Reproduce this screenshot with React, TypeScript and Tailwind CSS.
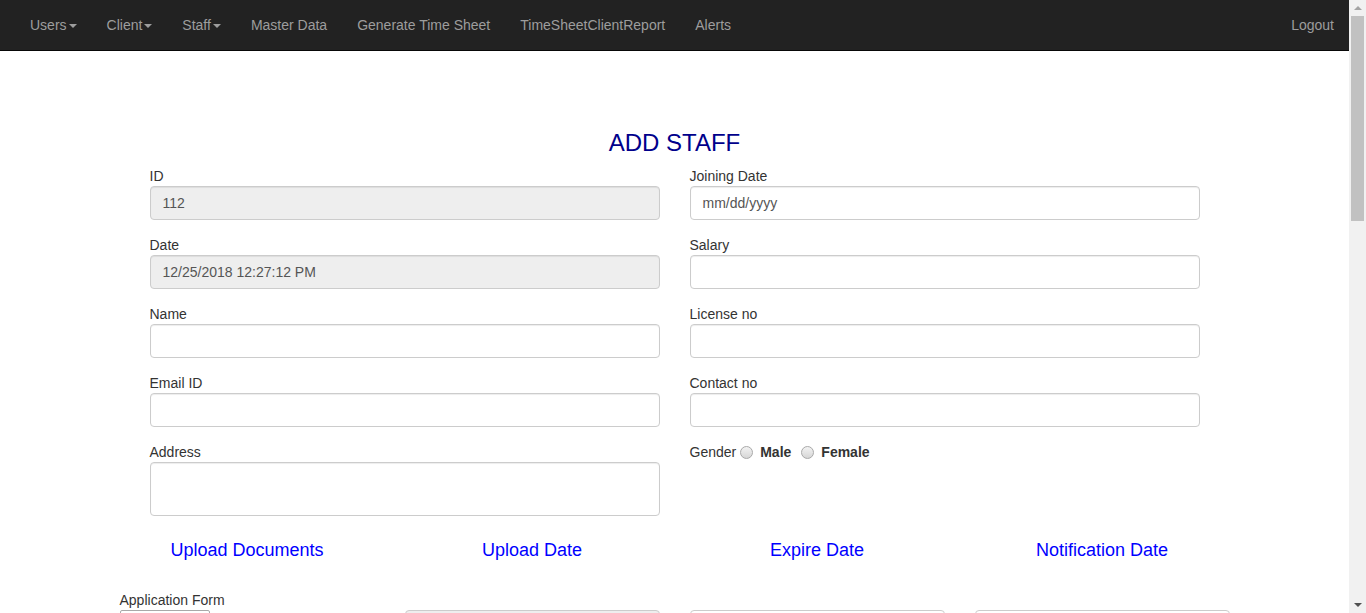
import React from "react";

const Caret = () => (
  <span className="ml-[2px] inline-block h-0 w-0 align-middle border-t-[4px] border-x-[4px] border-t-[#9d9d9d] border-x-transparent" />
);

const navItems: { label: string; caret?: boolean }[] = [
  { label: "Users", caret: true },
  { label: "Client", caret: true },
  { label: "Staff", caret: true },
  { label: "Master Data" },
  { label: "Generate Time Sheet" },
  { label: "TimeSheetClientReport" },
  { label: "Alerts" },
];

const Field = ({
  label,
  value,
  readOnly,
  tall,
}: {
  label: string;
  value?: string;
  readOnly?: boolean;
  tall?: boolean;
}) => (
  <div className="mb-[15px]">
    <div className="h-[20px] leading-[20px]">{label}</div>
    <div
      className={`w-full rounded-[4px] border border-[#ccc] px-[12px] py-[6px] leading-[20px] text-[#555] shadow-[inset_0_1px_1px_rgba(0,0,0,0.075)] ${
        readOnly ? "bg-[#eee]" : "bg-white"
      } ${tall ? "h-[54px]" : "h-[34px]"}`}
    >
      {value ?? ""}
    </div>
  </div>
);

const Radio = () => (
  <span className="inline-block h-[13px] w-[13px] rounded-full border border-[#a9a9a9] bg-gradient-to-b from-[#f3f3f3] to-[#d6d6d6]" />
);

export default function App() {
  return (
    <div className="flex h-[613px] w-[1366px] overflow-hidden bg-white font-['Liberation_Sans',Arial,sans-serif] text-[14px] leading-[20px] text-[#333]">
      <div className="min-w-0 flex-1 overflow-hidden">
        <nav className="flex h-[51px] justify-between border-b border-[#080808] bg-[#222] px-[15px]">
          <ul className="flex">
            {navItems.map((it) => (
              <li key={it.label} className="px-[15px] py-[15px] text-[#9d9d9d] leading-[20px]">
                {it.label}
                {it.caret && <Caret />}
              </li>
            ))}
          </ul>
          <ul className="-mr-[15px] flex">
            <li className="px-[15px] py-[15px] text-[#9d9d9d] leading-[20px]">Logout</li>
          </ul>
        </nav>

        <h3 className="mt-[79px] text-center text-[24px] leading-[26px] text-[#00008b]">ADD STAFF</h3>

        <div className="mx-auto mt-[10px] grid w-[1080px] grid-cols-2">
          <div className="px-[15px]">
            <Field label="ID" value="112" readOnly />
            <Field label="Date" value="12/25/2018 12:27:12 PM" readOnly />
            <Field label="Name" />
            <Field label="Email ID" />
            <Field label="Address" tall />
          </div>
          <div className="px-[15px]">
            <Field label="Joining Date" value="mm/dd/yyyy" />
            <Field label="Salary" />
            <Field label="License no" />
            <Field label="Contact no" />
            <div className="flex h-[20px] items-center">
              <span>Gender</span>
              <span className="ml-[4px] flex items-center">
                <Radio />
              </span>
              <span className="ml-[7px] font-bold">Male</span>
              <span className="ml-[10px] flex items-center">
                <Radio />
              </span>
              <span className="ml-[7px] font-bold">Female</span>
            </div>
          </div>
        </div>

        <div className="mx-auto mt-[9px] grid w-[1140px] grid-cols-4 text-center text-[18px] leading-[20px] text-[#0000ff]">
          <div>Upload Documents</div>
          <div>Upload Date</div>
          <div>Expire Date</div>
          <div>Notification Date</div>
        </div>

        <div className="mx-auto mt-[30px] grid w-[1140px] grid-cols-4">
          <div className="px-[15px]">
            <div className="leading-[20px]">Application Form</div>
            <div className="h-[24px] w-[90px] rounded-[2px] border border-[#a9a9a9] bg-white" />
          </div>
          <div className="px-[15px] pt-[20px]">
            <div className="h-[34px] rounded-[4px] border border-[#ccc] bg-[#eee]" />
          </div>
          <div className="px-[15px] pt-[20px]">
            <div className="h-[34px] rounded-[4px] border border-[#ccc] bg-white" />
          </div>
          <div className="px-[15px] pt-[20px]">
            <div className="h-[34px] rounded-[4px] border border-[#ccc] bg-white" />
          </div>
        </div>
      </div>

      <div className="flex h-full w-[17px] flex-col bg-[#f1f1f1]">
        <div className="flex h-[16px] items-center justify-center">
          <span className="h-0 w-0 border-b-[4px] border-x-[4px] border-b-[#a3a3a3] border-x-transparent" />
        </div>
        <div className="mx-[2px] h-[205px] bg-[#c1c1c1]" />
        <div className="flex-1" />
        <div className="flex h-[17px] items-center justify-center">
          <span className="h-0 w-0 border-t-[4px] border-x-[4px] border-t-[#505050] border-x-transparent" />
        </div>
      </div>
    </div>
  );
}
